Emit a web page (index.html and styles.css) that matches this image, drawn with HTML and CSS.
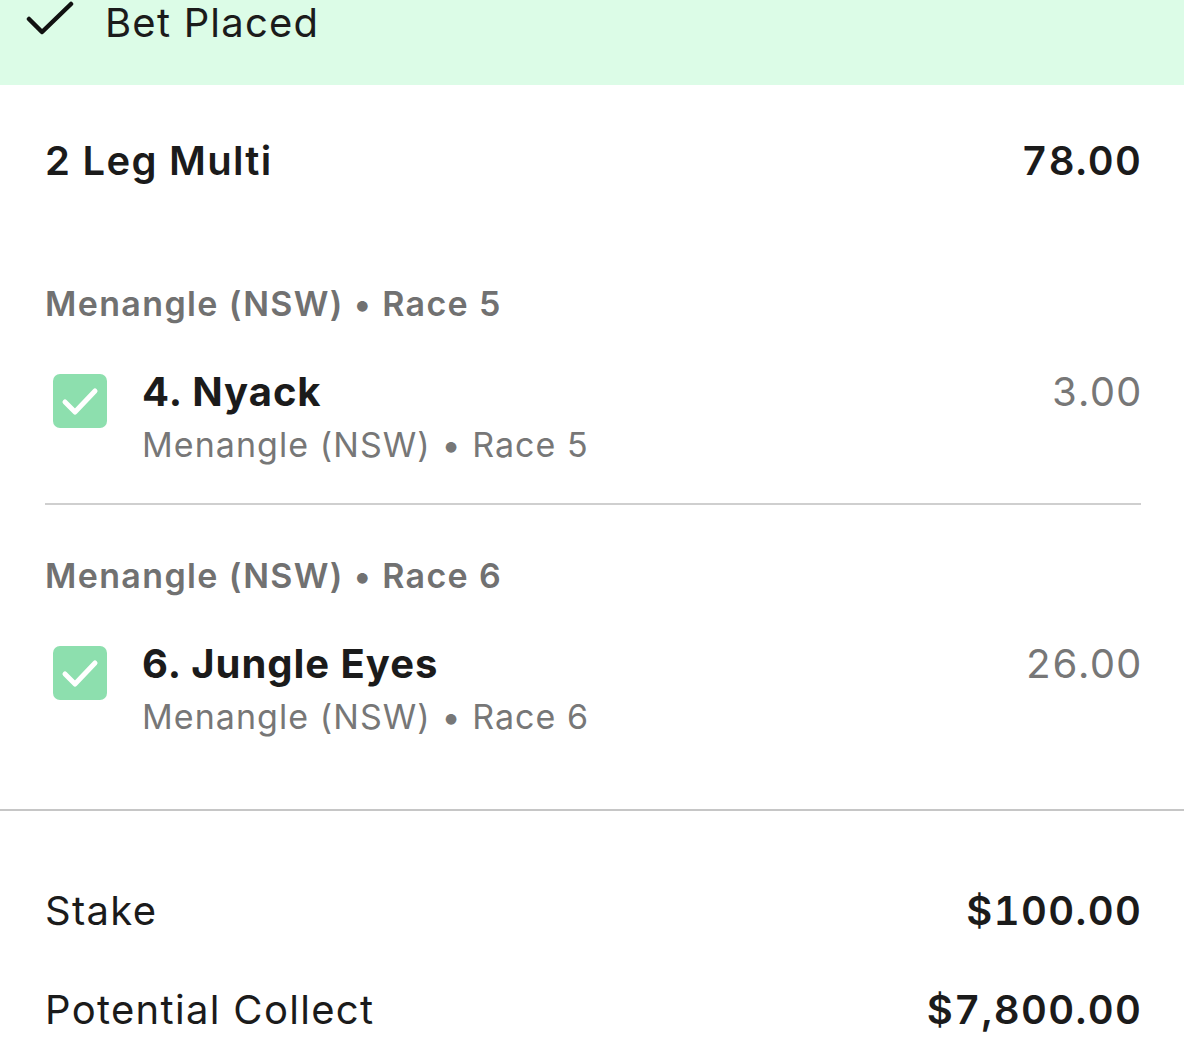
FILE: index.html
```html
<!DOCTYPE html>
<html lang="en">
<head>
    <meta charset="UTF-8" />
    <meta name="viewport" content="width=device-width, initial-scale=1" />
    <title>Bet Placed</title>
    <link rel="stylesheet" href="styles.css">
</head>
<body>
    <div class="banner">
        <svg class="banner-icon" width="48" height="40" viewBox="0 0 48 40">
            <polyline points="3,19 16,32 45,4" fill="none" stroke="#111" stroke-width="4.5" stroke-linecap="round" stroke-linejoin="round" />
        </svg>
        <span class="banner-text">Bet Placed</span>
    </div>

    <div class="slip">
        <div class="slip-header">
            <span class="slip-title">2 Leg Multi</span>
            <span class="num">78.00</span>
        </div>

        <div class="leg leg-divided">
            <div class="leg-heading">Menangle (NSW) • Race 5</div>
            <div class="leg-row">
                <span class="check">
                    <svg width="54" height="54" viewBox="0 0 54 54">
                        <polyline points="12,28 22,38 42,17" fill="none" stroke="#fff" stroke-width="5" stroke-linecap="round" stroke-linejoin="round" />
                    </svg>
                </span>
                <div class="leg-info">
                    <div class="leg-name">4. Nyack</div>
                    <div class="leg-meta">Menangle (NSW) • Race 5</div>
                </div>
                <span class="leg-price num">3.00</span>
            </div>
        </div>

        <div class="leg">
            <div class="leg-heading">Menangle (NSW) • Race 6</div>
            <div class="leg-row">
                <span class="check">
                    <svg width="54" height="54" viewBox="0 0 54 54">
                        <polyline points="12,28 22,38 42,17" fill="none" stroke="#fff" stroke-width="5" stroke-linecap="round" stroke-linejoin="round" />
                    </svg>
                </span>
                <div class="leg-info">
                    <div class="leg-name">6. Jungle Eyes</div>
                    <div class="leg-meta">Menangle (NSW) • Race 6</div>
                </div>
                <span class="leg-price num">26.00</span>
            </div>
        </div>
    </div>

    <div class="totals">
        <div class="total-row">
            <span>Stake</span>
            <span class="total-value num">$100.00</span>
        </div>
        <div class="total-row total-collect">
            <span>Potential Collect</span>
            <span class="total-value num">$7,800.00</span>
        </div>
    </div>
</body>
</html>
```

FILE: styles.css
```css
body {
    margin: 0;
    font-family: Inter, "Noto Sans", sans-serif;
    color: #1b1b1b;
    background: #fff;
    overflow: hidden;
    letter-spacing: 0.026em;
}
.banner {
    display: flex;
    align-items: center;
    gap: 31px;
    height: 44px;
    padding: 0 0 41px 26px;
    background: #dcfce7;
}
.banner-icon {
    display: block;
    margin-top: -4px;
}
.banner-text {
    font-size: 40px;
    line-height: 48px;
    margin-top: 2px;
    letter-spacing: 0.03em;
}
.slip {
    padding: 0 43px 0 45px;
    border-bottom: 2px solid #c6c6c6;
    padding-bottom: 72px;
}
.slip-header {
    display: flex;
    justify-content: space-between;
    margin-top: 52px;
    font-size: 40px;
    line-height: 48px;
    font-weight: 600;
    letter-spacing: 0.032em;
}
.num {
    font-variant-numeric: tabular-nums;
    margin-right: -0.03em;
}
.leg-heading {
    font-size: 34px;
    line-height: 40px;
    font-weight: 600;
    color: #717171;
    letter-spacing: 0.04em;
}
.slip-header + .leg .leg-heading {
    margin-top: 99px;
}
.leg-divided {
    border-bottom: 2px solid #cfcfcf;
    padding-bottom: 38px;
}
.leg-divided + .leg .leg-heading {
    margin-top: 51px;
}
.leg-row {
    display: flex;
    align-items: flex-start;
    margin-top: 44px;
}
.check {
    width: 54px;
    height: 54px;
    margin: 6px 35px 0 8px;
    border-radius: 7px;
    background: #8ddfae;
}
.check svg {
    display: block;
}
.leg-info {
    flex: 1;
}
.leg-name {
    font-size: 40px;
    line-height: 48px;
    font-weight: 650;
    letter-spacing: 0.024em;
}
.leg-meta {
    margin-top: 9px;
    font-size: 34px;
    line-height: 40px;
    color: #777;
    letter-spacing: 0.031em;
}
.leg-price {
    font-size: 40px;
    line-height: 48px;
    color: #777;
}
.totals {
    padding: 76px 43px 0 45px;
}
.total-row {
    display: flex;
    justify-content: space-between;
    font-size: 40px;
    line-height: 48px;
    letter-spacing: 0.033em;
}
.total-collect {
    margin-top: 51px;
}
.total-value {
    font-weight: 600;
    letter-spacing: 0.035em;
}
```
